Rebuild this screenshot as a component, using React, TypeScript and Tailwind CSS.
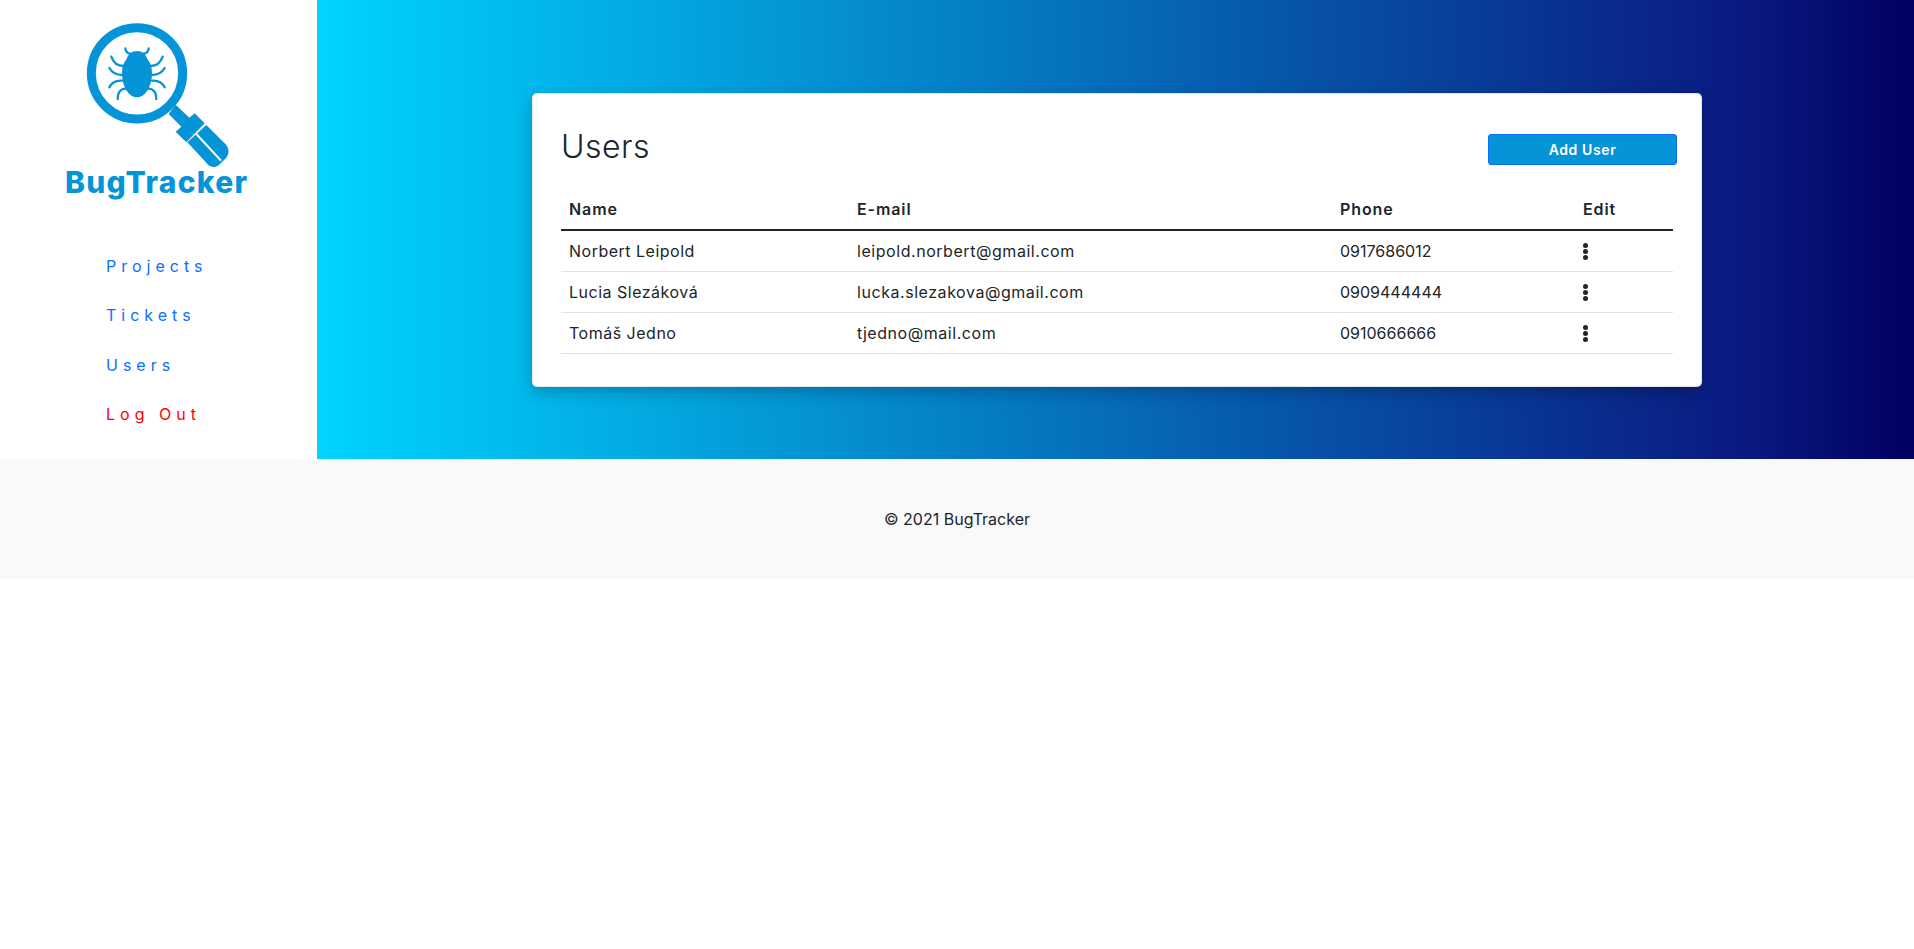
const users = [
  { name: 'Norbert Leipold', email: 'leipold.norbert@gmail.com', phone: '0917686012' },
  { name: 'Lucia Slezáková', email: 'lucka.slezakova@gmail.com', phone: '0909444444' },
  { name: 'Tomáš Jedno', email: 'tjedno@mail.com', phone: '0910666666' },
];

function Logo() {
  return (
    <svg width="150" height="150" viewBox="100 30 450 450" className="block ml-[19px]">
      <circle cx="262" cy="190" r="137" fill="none" stroke="#0694d8" strokeWidth="27" />
      {/* bug */}
      <path d="M262 123c16 0 27 10 31 24 9 10 14 24 14 42 0 40-20 73-45 73s-45-33-45-73c0-18 5-32 14-42 4-14 15-24 31-24z" fill="#0694d8" />
      <g fill="none" stroke="#0694d8" strokeWidth="7" strokeLinecap="round">
        <path d="M242 131c-9-1-14-7-15-16M282 131c9-1 14-7 15-16" />
        <path d="M222 168c-18 0-31-10-37-28M302 168c18 0 31-10 37-28" />
        <path d="M217 195c-17 0-30-7-38-21M307 195c17 0 30-7 38-21" />
        <path d="M217 212c-17-1-31 6-38 20M307 212c17-1 31 6 38 20" />
        <path d="M229 236c-17 0-26 13-25 31M295 236c17 0 26 13 25 31" />
      </g>
      {/* handle */}
      <path d="M378 284l-21 28 38 38-17 15 32 32 55-57-30-30-16 13z" fill="#0694d8" />
      <path d="M470 345l58 58c11 13 11 28 2 40l-22 22c-12 9-24 8-34-2l-61-66z" fill="#0694d8" />
      <path d="M440 372l74 80" stroke="#fff" strokeWidth="6" fill="none" />
    </svg>
  );
}

export default function App() {
  return (
    <div className="font-['Inter','Liberation_Sans',sans-serif] text-[16px] text-[#212529] bg-white min-h-[949px]">
      <div className="flex h-[459px]">
        <aside className="w-[317px] shrink-0 bg-white">
          <div className="pt-[20px] pl-[65px]">
            <div className="-ml-[1px]">
              <Logo />
            </div>
            <div className="-mt-[5px] text-[#0694d8] font-extrabold text-[30px] tracking-[1.3px] leading-[34px] whitespace-nowrap">BugTracker</div>
          </div>
          <nav className="mt-[43px] pl-[106px] flex flex-col tracking-[5px] text-[16px] leading-[49.3px] text-[#0d6efd]">
            <a>Projects</a>
            <a>Tickets</a>
            <a>Users</a>
            <a className="text-[#ff0000]">Log Out</a>
          </nav>
        </aside>
        <main className="flex-1 pl-[215px] pt-[93px] bg-[linear-gradient(90deg,#00d4ff_0%,#0a1880_90%,#000060_100%)]">
          <section className="w-[1170px] h-[294px] bg-white border border-black/10 rounded-[5px] shadow-[0_6px_16px_rgba(0,0,0,0.22)] pl-[28px] pr-[28px]">
            <div className="flex justify-between items-start pt-[34px] h-[92px] -mr-[4px]">
              <h2 className="text-[32px] leading-[38px] font-light tracking-[0.5px]">Users</h2>
              <button className="mt-[6px] w-[189px] h-[31px] rounded-[3px] border border-[#0d6efd] bg-[#0694d8] text-white text-[14px] font-semibold tracking-[0.6px]">Add User</button>
            </div>
            <table className="w-full table-fixed border-collapse text-[16px]">
              <thead>
                <tr className="h-[44px] border-b-2 border-[#212529] text-left tracking-[0.9px]">
                  <th className="w-[289px] pl-[8px] pt-[2px] font-semibold">Name</th>
                  <th className="w-[483px] pl-[7px] pt-[2px] font-semibold">E-mail</th>
                  <th className="w-[243px] pl-[7px] pt-[2px] font-semibold">Phone</th>
                  <th className="pl-[7px] pt-[2px] font-semibold">Edit</th>
                </tr>
              </thead>
              <tbody>
                {users.map((u) => (
                  <tr key={u.email} className="h-[41px] border-b border-[#dee2e6]">
                    <td className="pl-[8px] tracking-[0.5px]">{u.name}</td>
                    <td className="pl-[7px] tracking-[0.55px]">{u.email}</td>
                    <td className="pl-[7px]">{u.phone}</td>
                    <td className="pl-[7px] pt-[1px]">
                      <div className="flex flex-col gap-[1px] w-[5px]">
                        <span className="size-[5px] rounded-full bg-[#212529]" />
                        <span className="size-[5px] rounded-full bg-[#212529]" />
                        <span className="size-[5px] rounded-full bg-[#212529]" />
                      </div>
                    </td>
                  </tr>
                ))}
              </tbody>
            </table>
          </section>
        </main>
      </div>
      <footer className="h-[120px] pb-[1px] bg-[#f8f9fa] flex items-center justify-center">
        <p className="text-[16px]">© 2021 BugTracker</p>
      </footer>
    </div>
  );
}
